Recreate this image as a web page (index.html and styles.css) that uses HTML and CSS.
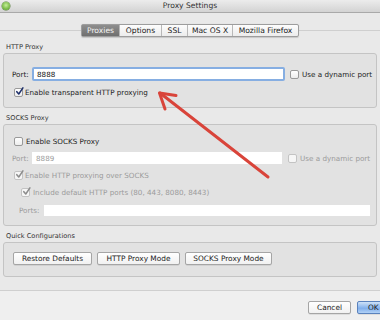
FILE: index.html
```html
<!DOCTYPE html>
<html>
<head>
<meta charset="utf-8">
<link rel="stylesheet" href="styles.css">
</head>
<body>
<div class="window">
  <div class="titlebar">
    <span class="dot"></span>
    <span class="title">Proxy Settings</span>
    <span></span>
  </div>
  <div class="main">
    <div class="tabbar">
      <div class="tabs">
        <span class="tab active">Proxies</span>
        <span class="tab">Options</span>
        <span class="tab">SSL</span>
        <span class="tab">Mac OS X</span>
        <span class="tab">Mozilla Firefox</span>
      </div>
    </div>

    <div class="legend">HTTP Proxy</div>
    <div class="group g-http">
      <div class="row">
        <span class="lbl lbl-port">Port:</span>
        <span class="input focus">8888</span>
        <span class="cb"></span>
        <span class="txt">Use a dynamic port</span>
      </div>
      <div class="row r-check">
        <span class="cb checked"><svg viewBox="0 0 10 10"><path d="M2 5.2 L4.2 7.8 L8.8 1"/></svg></span>
        <span class="txt">Enable transparent HTTP proxying</span>
      </div>
    </div>

    <div class="legend">SOCKS Proxy</div>
    <div class="group g-socks">
      <div class="row">
        <span class="cb"></span>
        <span class="txt">Enable SOCKS Proxy</span>
      </div>
      <div class="row dis">
        <span class="lbl lbl-port2">Port:</span>
        <span class="input small">8889</span>
        <span class="cb"></span>
        <span class="txt">Use a dynamic port</span>
      </div>
      <div class="row dis">
        <span class="cb checked"><svg viewBox="0 0 10 10"><path d="M2 5.2 L4.2 7.8 L8.8 1"/></svg></span>
        <span class="txt">Enable HTTP proxying over SOCKS</span>
      </div>
      <div class="row dis indent">
        <span class="cb checked"><svg viewBox="0 0 10 10"><path d="M2 5.2 L4.2 7.8 L8.8 1"/></svg></span>
        <span class="txt">Include default HTTP ports (80, 443, 8080, 8443)</span>
      </div>
      <div class="row dis indent2">
        <span class="lbl lbl-ports">Ports:</span>
        <span class="input wide"></span>
      </div>
    </div>

    <div class="legend">Quick Configurations</div>
    <div class="group g-quick">
      <div class="row btns">
        <span class="btn b1">Restore Defaults</span>
        <span class="btn b2">HTTP Proxy Mode</span>
        <span class="btn b3">SOCKS Proxy Mode</span>
      </div>
    </div>
  </div>
  <div class="footer">
    <span class="btn cancel">Cancel</span>
    <span class="btn ok">OK</span>
  </div>
  <svg class="arrow" width="380" height="320" viewBox="0 0 380 320">
    <path d="M268 177 L160 93"/>
    <path d="M176 95.5 L159.5 93 L165 109"/>
  </svg>
</div>
</body>
</html>
```
FILE: styles.css
```css
html, body {
  margin: 0;
  padding: 0;
}
body {
  width: 380px;
  height: 320px;
  overflow: hidden;
  font-family: "DejaVu Sans", sans-serif;
  font-size: 7.2px;
  color: #222;
}
.window {
  position: relative;
  width: 380px;
  height: 320px;
  background: #e9e9e9;
  overflow: hidden;
}
.titlebar {
  height: 13px;
  box-sizing: border-box;
  border-bottom: 1px solid #a9a9a9;
  background: linear-gradient(#ececec, #d3d3d3);
  display: grid;
  grid-template-columns: 1fr auto 1fr;
  align-items: center;
}
.dot {
  width: 8px;
  height: 8px;
  border-radius: 50%;
  margin-left: 2px;
  background: radial-gradient(circle at 50% 40%, #c6ef9a, #6fb23c 70%, #4f8a2a);
  box-shadow: 0 0 0 0.5px #5a7e3f;
}
.title {
  font-size: 7.6px;
  color: #333;
  line-height: 12px;
}
.main {
  display: flex;
  flex-direction: column;
}
.tabbar {
  margin-top: 11px;
  height: 13px;
  display: flex;
  justify-content: center;
  background: linear-gradient(transparent 6px, #cfcfcf 6px, #cfcfcf 7px, transparent 7px);
}
.tabs {
  display: flex;
  height: 13px;
  box-sizing: border-box;
  border: 1px solid #9d9d9d;
  border-radius: 2px;
  background: linear-gradient(#fdfdfd, #ececec);
  box-shadow: 0 0.5px 1px rgba(0,0,0,0.15);
}
.tab {
  display: flex;
  align-items: center;
  justify-content: center;
  font-size: 7.6px;
  line-height: 11px;
  border-left: 1px solid #b8b8b8;
}
.tab:nth-child(1) { width: 37px; border-left: none; }
.tab:nth-child(2) { width: 41px; }
.tab:nth-child(3) { width: 25px; }
.tab:nth-child(4) { width: 44px; }
.tab:nth-child(5) { width: 65px; }
.tab.active {
  background: linear-gradient(#8e8e8e, #6f6f6f);
  color: #f4f4f4;
}
.legend {
  padding: 4px 0 1px 6px;
  line-height: 10px;
  font-size: 6.6px;
  color: #333;
}
.main > .legend:not(:first-of-type) { padding-top: 5px; }
.group {
  margin: 0 3px;
  box-sizing: border-box;
  border: 1px solid #c4c4c4;
  border-radius: 3px;
  background: #e2e2e2;
  display: flex;
  flex-direction: column;
}
.g-http {
  height: 55px;
  padding: 13px 0 0 8px;
  gap: 4px;
}
.g-socks {
  height: 102px;
  padding: 10px 0 0 10px;
  gap: 5px;
}
.g-quick {
  height: 35px;
  padding: 9px 0 0 9px;
}
.row {
  display: flex;
  align-items: center;
  height: 12px;
}
.g-http .row { height: 14px; }
.lbl-port { width: 20px; }
.lbl-port2 { width: 20px; margin-left: -2px; }
.input {
  box-sizing: border-box;
  height: 14px;
  width: 253px;
  background: #fff;
  display: flex;
  align-items: center;
  padding-left: 4px;
  margin-right: 5px;
}
.input.focus {
  border: 2px solid #86aee2;
  border-radius: 2px;
  padding-left: 3px;
  color: #111;
}
.input.small {
  height: 12px;
  width: 250px;
  margin-right: 6px;
}
.cb {
  width: 9px;
  height: 9px;
  box-sizing: border-box;
  border: 1px solid #9a9a9a;
  border-radius: 2px;
  background: linear-gradient(#ffffff, #ededed);
  margin-right: 3px;
  flex: none;
  position: relative;
}
.r-check .cb { margin-left: 2px; margin-right: 2px; }
.cb svg {
  position: absolute;
  left: 0;
  top: -2px;
  width: 9px;
  height: 9px;
  overflow: visible;
}
.cb svg path {
  fill: none;
  stroke: #1d2f6a;
  stroke-width: 1.7;
  stroke-linecap: round;
  stroke-linejoin: round;
}
.dis { color: #9b9b9b; }
.dis .cb { border-color: #c3c3c3; background: #f6f6f6; }
.dis .cb svg path { stroke: #8c8c8c; }
.g-socks .row.dis:nth-child(3) .cb { margin-right: 2px; }
.indent .cb { margin-left: 7px; margin-right: 3px; }
.indent2 { margin-top: 1px; }
.lbl-ports { width: 25px; margin-left: 5px; }
.input.wide {
  width: 326px;
  height: 11px;
}
.txt { white-space: nowrap; }
.btns { gap: 5px; height: 13px; }
.btn {
  box-sizing: border-box;
  height: 13px;
  display: flex;
  align-items: center;
  justify-content: center;
  border: 1px solid #a5a5a5;
  border-radius: 2px;
  background: linear-gradient(#ffffff, #f1f1f1);
  box-shadow: 0 0.5px 0.5px rgba(0,0,0,0.15);
  font-size: 7.4px;
  white-space: nowrap;
  flex: none;
}
.b1 { width: 79px; }
.b2 { width: 83px; }
.b3 { width: 87px; }
.footer {
  margin-top: 13px;
  border-top: 1px solid #cfcfcf;
  background: #efefef;
  height: 40px;
  box-sizing: border-box;
  display: flex;
  gap: 6px;
  padding: 10px 0 0 308px;
}
.cancel { width: 43px; }
.ok {
  width: 46px;
  border-color: #5a82bd;
  background: linear-gradient(#cfe2f8, #8ab6ee 50%, #7aaaea 51%, #b1d1f6);
  justify-content: flex-start;
  padding-left: 10px;
}
.arrow {
  position: absolute;
  left: 0;
  top: 0;
  pointer-events: none;
}
.arrow path {
  fill: none;
  stroke: #d9443a;
  stroke-width: 3;
  stroke-linecap: round;
  stroke-linejoin: round;
}
```
